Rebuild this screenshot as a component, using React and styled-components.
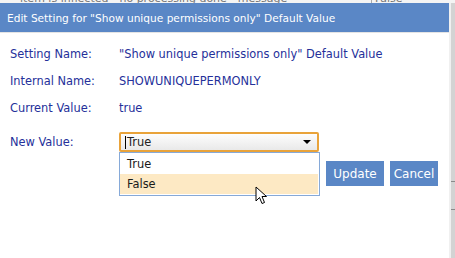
import React from 'react';
import styled, { createGlobalStyle } from 'styled-components';

const GlobalStyle = createGlobalStyle`
  html, body {
    margin: 0;
    padding: 0;
    background: #ffffff;
  }
  body {
    width: 455px;
    height: 258px;
    overflow: hidden;
    font-family: "DejaVu Sans", Verdana, sans-serif;
  }
`;

const Page = styled.div`
  display: flex;
  flex-direction: column;
  width: 455px;
  height: 258px;
`;

const BehindRow = styled.div`
  height: 3px;
  overflow: hidden;
  display: flex;
  align-items: flex-end;
  background: #f4f4f4;
  font-size: 11px;
  color: #777;
  white-space: nowrap;
`;

const BehindCell = styled.div`
  width: ${(p) => p.$w}px;
  padding-left: ${(p) => p.$pad}px;
  line-height: 8px;
  border-right: ${(p) => (p.$line ? '1px solid #aaa' : 'none')};
  box-sizing: border-box;
`;

const Body = styled.div`
  flex: 1;
  display: flex;
`;

const Dialog = styled.div`
  width: 449px;
  display: flex;
  flex-direction: column;
  background: #fff;
`;

const TitleBar = styled.div`
  height: 29px;
  background: #5a87c6;
  color: #fff;
  display: flex;
  align-items: center;
  padding-left: 7px;
  font-size: 10.6px;
  border-bottom: 1px solid #e4e4e4;
`;

const Content = styled.div`
  position: relative;
  padding: 7px 0 0 10px;
  color: #25309a;
  font-size: 11.4px;
`;

const Row = styled.div`
  display: flex;
  align-items: center;
  height: ${(p) => (p.$h ? `${p.$h}px` : 'auto')};
  padding-top: ${(p) => p.$top || 0}px;
`;

const Label = styled.div`
  width: 109px;
`;

const Value = styled.div``;

const SelectWrap = styled.div`
  position: relative;
  width: 200px;
`;

const SelectBox = styled.div`
  height: 20px;
  box-sizing: border-box;
  border: 2px solid #e9a33a;
  border-radius: 2px;
  background: linear-gradient(#fdfdfd, #e9e9e9);
  display: flex;
  align-items: center;
  padding-left: 4px;
  color: #222;
`;

const Caret = styled.span`
  width: 1px;
  height: 13px;
  background: #000;
  margin-right: 1px;
`;

const SelectText = styled.span`
  flex: 1;
`;

const Arrow = styled.span`
  width: 0;
  height: 0;
  border-left: 4px solid transparent;
  border-right: 4px solid transparent;
  border-top: 4px solid #000;
  margin-right: 6px;
`;

const ListBox = styled.div`
  position: absolute;
  top: 20px;
  left: 0;
  width: 201px;
  box-sizing: border-box;
  border: 1px solid #86a9d8;
  background: #fff;
  padding: 1px 0;
  color: #1a1a1a;
`;

const Option = styled.div`
  height: 20px;
  display: flex;
  align-items: center;
  padding-left: 7px;
  margin-right: 1px;
  background: ${(p) => (p.$hover ? '#fde9c4' : 'transparent')};
`;

const Buttons = styled.div`
  display: flex;
  justify-content: flex-end;
  gap: 6px;
  padding-right: 11px;
  margin-top: 9px;
`;

const Button = styled.div`
  width: ${(p) => p.$w}px;
  height: 25px;
  background: #5a87c6;
  color: #fff;
  display: flex;
  align-items: center;
  justify-content: center;
  font-size: 12px;
`;

const Pointer = styled.svg`
  position: absolute;
  left: 255px;
  top: 153px;
`;

const Gutter = styled.div`
  flex: 1;
  display: flex;
  border-left: 2px solid #f0f0f0;
  background: #d3d3d3;
  flex-direction: column;
`;

const GutterLine = styled.div`
  height: 1px;
  background: #8a8a8a;
  margin-top: ${(p) => p.$top}px;
`;

export default function App() {
  return (
    <>
      <GlobalStyle />
      <Page>
        <BehindRow>
          <BehindCell $w={372} $pad={20} $line>
            item is inflected - no processing done - message
          </BehindCell>
          <BehindCell $w={83} $pad={3}>
            False
          </BehindCell>
        </BehindRow>
        <Body>
          <Dialog>
            <TitleBar>Edit Setting for "Show unique permissions only" Default Value</TitleBar>
            <Content>
              <Row $h={27}>
                <Label>Setting Name:</Label>
                <Value>"Show unique permissions only" Default Value</Value>
              </Row>
              <Row $h={27}>
                <Label>Internal Name:</Label>
                <Value>SHOWUNIQUEPERMONLY</Value>
              </Row>
              <Row $h={27}>
                <Label>Current Value:</Label>
                <Value>true</Value>
              </Row>
              <Row $top={11}>
                <Label>New Value:</Label>
                <SelectWrap>
                  <SelectBox>
                    <Caret />
                    <SelectText>True</SelectText>
                    <Arrow />
                  </SelectBox>
                  <ListBox>
                    <Option>True</Option>
                    <Option $hover>False</Option>
                  </ListBox>
                </SelectWrap>
              </Row>
              <Buttons>
                <Button $w={58}>Update</Button>
                <Button $w={48}>Cancel</Button>
              </Buttons>
              <Pointer width="14" height="20" viewBox="0 0 14 20">
                <path
                  d="M1 1 L1 15 L4.5 11.5 L7 17.5 L9.5 16.5 L7 10.5 L11.5 10.5 Z"
                  fill="#fff"
                  stroke="#000"
                  strokeWidth="1"
                  strokeLinejoin="round"
                />
              </Pointer>
            </Content>
          </Dialog>
          <Gutter>
            <GutterLine $top={178} />
            <GutterLine $top={27} />
          </Gutter>
        </Body>
      </Page>
    </>
  );
}
